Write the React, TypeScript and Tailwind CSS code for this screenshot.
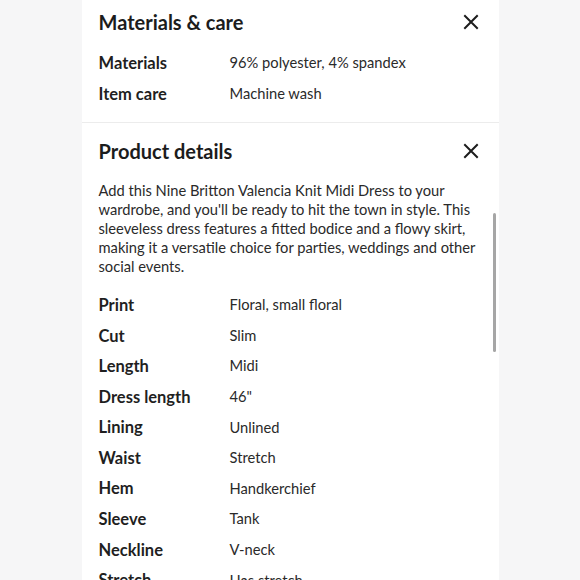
import React from 'react';

const font = { fontFamily: 'Lato, "Noto Sans", sans-serif' };

function CloseIcon() {
  return (
    <svg width="16" height="16" viewBox="0 0 16 16" fill="none" stroke="#1c1c1c" strokeWidth="2" strokeLinecap="square">
      <path d="M2 2 L14 14 M14 2 L2 14" />
    </svg>
  );
}

function Row({ label, value, h }: { label: string; value: string; h: string }) {
  return (
    <div className={`flex items-center ${h}`}>
      <div className="w-[131px] shrink-0 text-[16.5px] font-bold text-[#1f1f1f] translate-y-[1px]">{label}</div>
      <div className="text-[14.7px] text-[#2a2a2a]">{value}</div>
    </div>
  );
}

export default function App() {
  const materials = [
    { label: 'Materials', value: '96% polyester, 4% spandex' },
    { label: 'Item care', value: 'Machine wash' },
  ];
  const details = [
    { label: 'Print', value: 'Floral, small floral' },
    { label: 'Cut', value: 'Slim' },
    { label: 'Length', value: 'Midi' },
    { label: 'Dress length', value: '46"' },
    { label: 'Lining', value: 'Unlined' },
    { label: 'Waist', value: 'Stretch' },
    { label: 'Hem', value: 'Handkerchief' },
    { label: 'Sleeve', value: 'Tank' },
    { label: 'Neckline', value: 'V-neck' },
    { label: 'Stretch', value: 'Has stretch' },
  ];

  return (
    <div className="w-[580px] h-[580px] overflow-hidden bg-[#f6f6f7]" style={font}>
      <div className="relative mx-auto w-[417px] h-full bg-white">
        <section className="px-[17px] pb-[13px]">
          <div className="flex h-[44px] items-center justify-between">
            <h2 className="text-[20px] font-bold text-[#1c1c1c]">Materials &amp; care</h2>
            <div className="mr-[3px]"><CloseIcon /></div>
          </div>
          <div className="mt-[2.5px]">
            {materials.map((m) => (
              <Row key={m.label} label={m.label} value={m.value} h="h-[31px]" />
            ))}
          </div>
        </section>
        <div className="h-px bg-[#ececec]" />
        <section className="px-[17px]">
          <div className="flex h-[44px] mt-[6px] items-center justify-between">
            <h2 className="text-[20px] font-bold text-[#1c1c1c]">Product details</h2>
            <div className="mr-[3px]"><CloseIcon /></div>
          </div>
          <p className="mt-[8.5px] -mr-[8px] whitespace-nowrap text-[14.7px] leading-[19px] text-[#2a2a2a]">
            Add this Nine Britton Valencia Knit Midi Dress to your
            <br />
            wardrobe, and you'll be ready to hit the town in style. This
            <br />
            sleeveless dress features a fitted bodice and a flowy skirt,
            <br />
            making it a versatile choice for parties, weddings and other
            <br />
            social events.
          </p>
          <div className="mt-[13px]">
            {details.map((d) => (
              <Row key={d.label} label={d.label} value={d.value} h="h-[30.6px]" />
            ))}
          </div>
        </section>
        <div className="absolute left-[411px] top-[213px] h-[139px] w-[3px] rounded-full bg-[#a6a6a6]" />
      </div>
    </div>
  );
}
